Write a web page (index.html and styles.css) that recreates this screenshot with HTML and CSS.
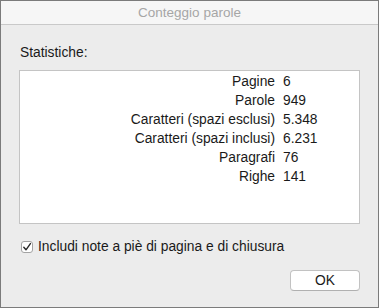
FILE: index.html
```html
<!DOCTYPE html>
<html lang="it">
<head>
<meta charset="utf-8">
<title>Conteggio parole</title>
<link rel="stylesheet" href="styles.css">
</head>
<body>
<div class="window">
  <div class="titlebar">Conteggio parole</div>
  <div class="content">
    <div class="section-label">Statistiche:</div>
    <div class="panel">
      <div class="stats">
        <span class="k">Pagine</span><span class="v">6</span>
        <span class="k">Parole</span><span class="v">949</span>
        <span class="k">Caratteri (spazi esclusi)</span><span class="v">5.348</span>
        <span class="k">Caratteri (spazi inclusi)</span><span class="v">6.231</span>
        <span class="k">Paragrafi</span><span class="v">76</span>
        <span class="k">Righe</span><span class="v">141</span>
      </div>
    </div>
    <label class="check-row">
      <span class="checkbox"><svg width="10" height="10" viewBox="0 0 10 10"><path d="M1.8 5.2 L4 7.8 L8.4 1.6" fill="none" stroke="#2a2a2a" stroke-width="1.4" stroke-linecap="round" stroke-linejoin="round"/></svg></span>
      <span class="check-text">Includi note a piè di pagina e di chiusura</span>
    </label>
    <div class="actions">
      <button class="btn">OK</button>
    </div>
  </div>
</div>
</body>
</html>
```

FILE: styles.css
```css
* { box-sizing: border-box; }
html, body { margin: 0; padding: 0; }
body {
  font-family: "Liberation Sans", Arial, sans-serif;
  font-size: 13.8px;
  color: #1a1a1a;
  background: #ececec;
}
.window {
  width: 379px;
  height: 308px;
  border: 1px solid #7b7b7b;
  background: #ececec;
  display: flex;
  flex-direction: column;
}
.titlebar {
  height: 24px;
  background: #f6f6f6;
  border-bottom: 1px solid #c9c9c9;
  text-align: center;
  line-height: 23px;
  color: #a6a6a6;
  font-size: 13.5px;
}
.content {
  padding: 20px 18px 0 18px;
  display: flex;
  flex-direction: column;
}
.section-label {
  line-height: 16px;
  height: 16px;
  padding-left: 1px;
  margin-bottom: 9px;
}
.panel {
  height: 154px;
  background: #ffffff;
  border: 1px solid #c4c4c4;
  padding-top: 1px;
}
.stats {
  display: grid;
  grid-template-columns: 255px auto;
  column-gap: 8px;
  line-height: 19px;
}
.stats .k { text-align: right; }
.stats .v { text-align: left; }
.check-row {
  display: flex;
  align-items: center;
  margin-top: 15px;
  height: 16px;
  padding-left: 2px;
}
.checkbox {
  width: 12px;
  height: 12px;
  border: 1px solid #a3a3a3;
  border-radius: 3px;
  background: #fff;
  display: flex;
  align-items: center;
  justify-content: center;
}
.check-text {
  margin-left: 5px;
  line-height: 16px;
}
.actions {
  display: flex;
  justify-content: flex-end;
  margin-top: 15px;
}
.btn {
  width: 70px;
  height: 21px;
  background: #ffffff;
  border: 1px solid #c2c2c2;
  border-bottom-color: #b0b0b0;
  border-radius: 4px;
  font-family: "Liberation Sans", Arial, sans-serif;
  font-size: 13.8px;
  color: #1a1a1a;
  padding: 0;
  line-height: 19px;
}
```
